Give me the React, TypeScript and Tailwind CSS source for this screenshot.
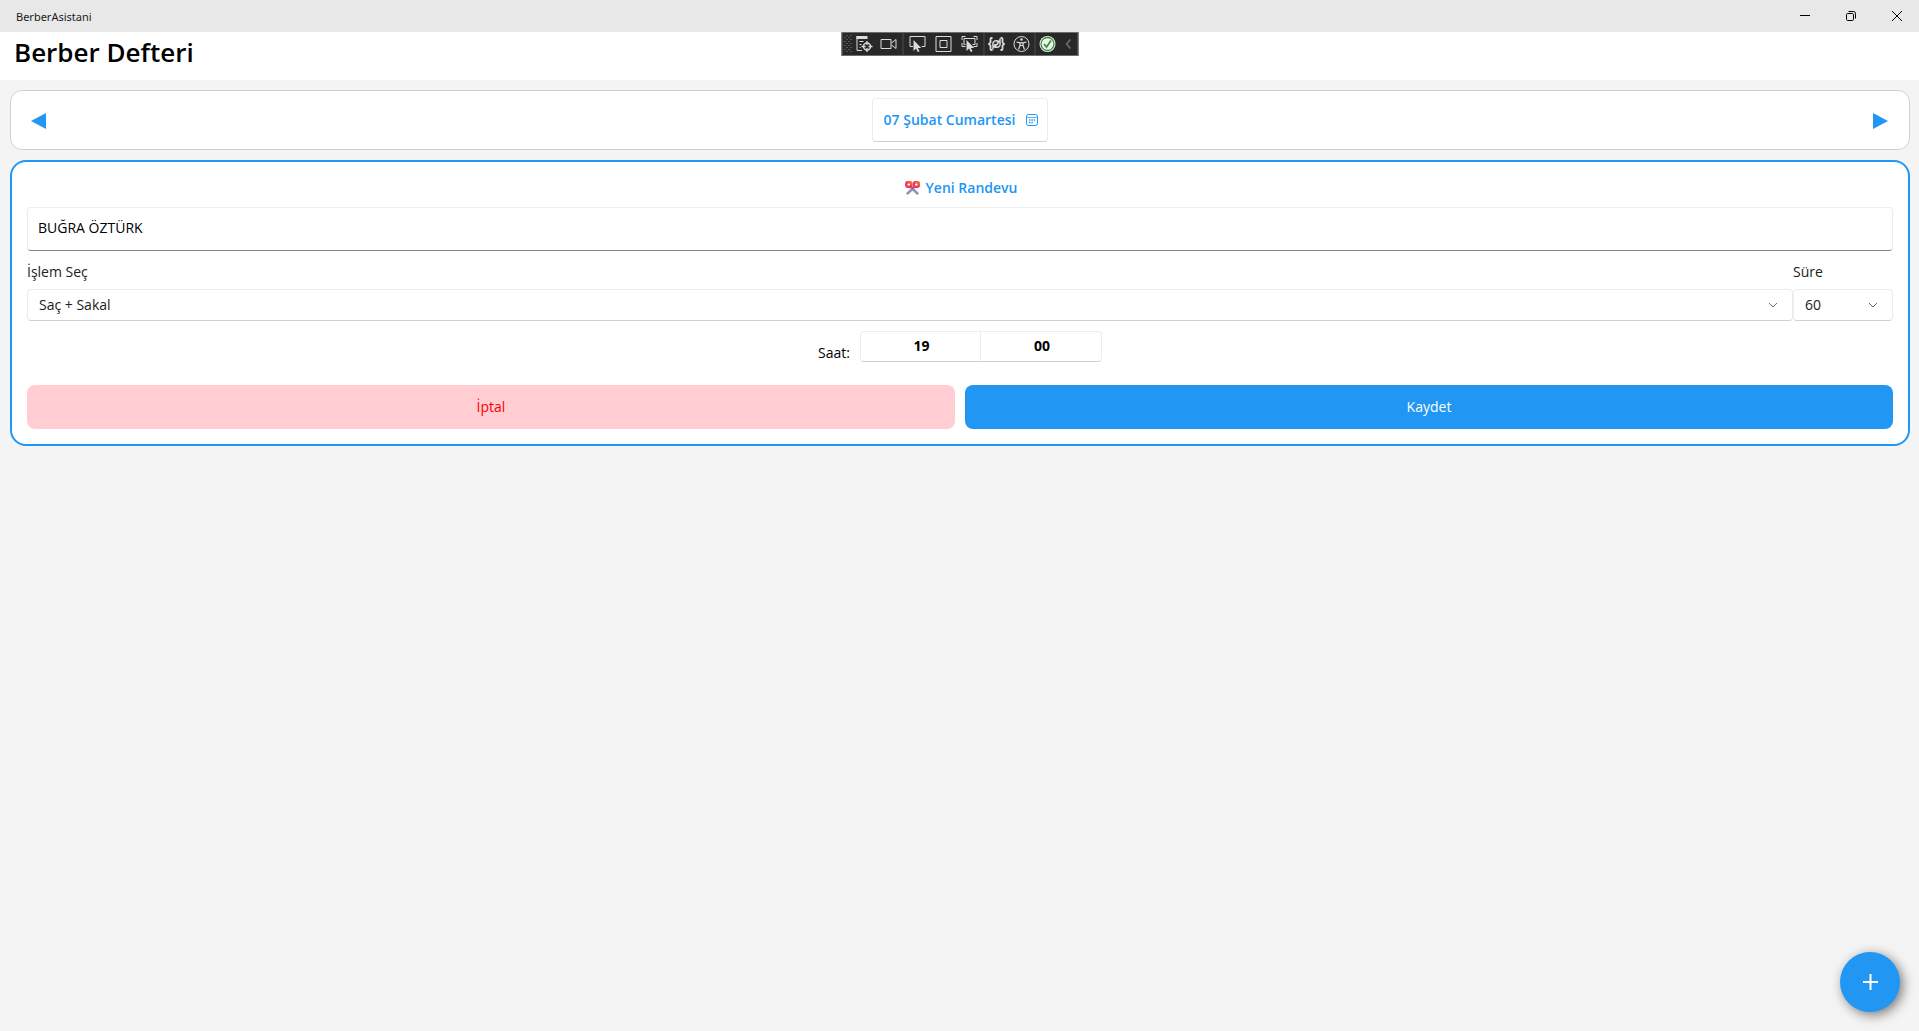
import { useState } from 'react';
import type { ReactNode } from 'react';

const SERVICES = ['Saç', 'Sakal', 'Saç + Sakal'];
const DURATIONS = ['15', '30', '45', '60', '90'];

function TitleBar() {
  return (
    <div className="flex h-8 items-center justify-between overflow-hidden bg-[#e8e8e8] pl-4">
      <span className="pt-0.5 font-['Noto_Sans',sans-serif] text-[11px] leading-4 text-[#1a1a1a]">BerberAsistani</span>
      <div className="-mr-px flex h-full">
        <button aria-label="Simge durumuna küçült" className="flex h-full w-[46px] items-center justify-center">
          <svg width="10" height="10" viewBox="0 0 10 10" shapeRendering="crispEdges">
            <path d="M0 4h10v1H0z" fill="#000" />
          </svg>
        </button>
        <button aria-label="Önceki boyut" className="flex h-full w-[46px] items-center justify-center">
          <svg width="10" height="10" viewBox="0 0 10 10" fill="none" stroke="#000">
            <rect x="0.5" y="2.5" width="7" height="7" rx="1.2" />
            <path d="M2.5 0.5h5a2 2 0 0 1 2 2v5" />
          </svg>
        </button>
        <button aria-label="Kapat" className="flex h-full w-[46px] items-center justify-center">
          <svg width="10" height="10" viewBox="0 0 10 10" fill="none" stroke="#000">
            <path d="M0 0l10 10M10 0L0 10" />
          </svg>
        </button>
      </div>
    </div>
  );
}

function ToolButton({ label, children }: { label: string; children: ReactNode }) {
  return (
    <button aria-label={label} className="flex h-full w-6 items-center justify-center">
      <svg width="18" height="18" viewBox="0 0 18 18" fill="none" stroke="#dcdcdc">
        {children}
      </svg>
    </button>
  );
}

const CURSOR = 'M0 0v10l2.3-2.2 1.6 3.2 1.6-.8L3.9 7.2H7z';

// Hata ayıklama araç çubuğu
function DebugToolbar() {
  return (
    <div className="absolute top-8 left-1/2 flex h-6 w-[237px] -translate-x-1/2 items-center border border-[#6b6f6b] bg-[#282828]">
      <svg width="9" height="18" viewBox="0 0 9 18" className="ml-px" shapeRendering="crispEdges">
        {[0, 4, 8, 12, 16].map((y) => (
          <path key={y} d={`M2 ${y}h2v1h-2zM6 ${y}h2v1h-2zM0 ${y + 2}h2v1h-2zM4 ${y + 2}h2v1h-2z`} fill="#555" />
        ))}
      </svg>
      <div className="flex w-12">
        <ToolButton label="Canlı görsel ağaç">
          <path d="M1.5 1v14.5h5" />
          <path d="M1 2.5h11" strokeWidth="3" />
          <path d="M4 6.5h4M4 9.5h2M4 12.5h1" />
          <circle cx="11.5" cy="11.5" r="3.5" strokeWidth="1.4" />
          <path d="M11.5 6v4M11.5 13v4M6 11.5h4M13 11.5h4" strokeWidth="1.3" />
        </ToolButton>
        <ToolButton label="Kayıt">
          <path d="M1.5 4.5h10v9h-10zM12 8l4.5-3.5v9L12 10" />
        </ToolButton>
      </div>
      <div className="ml-0.5 h-full w-px bg-[#4a4a4a]" />
      <div className="flex w-20 justify-between px-0.5">
        <ToolButton label="Öğe seç">
          <path d="M4.5 11.5h-3v-10h15v10h-3.5" />
          <path d={CURSOR} transform="translate(5 5) scale(1.1)" fill="#dcdcdc" stroke="none" />
        </ToolButton>
        <ToolButton label="Düzen kılavuzları">
          <path d="M1.5 1.5h15v15h-15zM5.5 5.5h7v7h-7z" />
        </ToolButton>
        <ToolButton label="Odağı izle">
          <path d="M1.5 5V1.5H5M13 1.5h3.5V5M1.5 8v3.5H5M16.5 8v3.5H13M5 9.5H3.5v-6h11v6H12" />
          <path d={CURSOR} transform="translate(6 5) scale(1.1)" fill="#dcdcdc" stroke="none" />
        </ToolButton>
      </div>
      <div className="h-full w-px bg-[#4a4a4a]" />
      <div className="flex w-[50px] justify-between pr-px">
        <ToolButton label="Çalışırken yenile">
          <path
            d="M5 3H4Q3 3 3 4v3.5L1.5 9 3 10.5V14q0 1 1 1h1M13 3h1q1 0 1 1v3.5L16.5 9 15 10.5V14q0 1-1 1h-1"
            strokeWidth="1.8"
          />
          <path
            d="M5.5 11C4.5 6 8 4.5 12 6.5M12.5 7c1 5-2.5 6.5-6.5 4.5M12.5 3.5V7H9M5.5 14.5V11H9M7 9l1.5 1.5L11 8"
            strokeWidth="1.4"
          />
        </ToolButton>
        <ToolButton label="Erişilebilirlik">
          <circle cx="9" cy="9" r="7.5" />
          <circle cx="9" cy="4.5" r="1.3" fill="#dcdcdc" stroke="none" />
          <path d="M4 7l3.5.8v2.7L6 14.5M14 7l-3.5.8v2.7l1.5 4M7.5 7.8h3M7.5 10.5h3" strokeWidth="1.2" />
        </ToolButton>
      </div>
      <div className="h-full w-px bg-[#4a4a4a]" />
      <ToolButton label="Bağlantı durumu">
        <circle cx="9" cy="9" r="8" fill="#f2f2f2" stroke="none" />
        <circle cx="9" cy="9" r="6.5" stroke="#389438" strokeWidth="1.3" />
        <path d="M5.5 9L8 12l4.5-6.5" stroke="#389438" strokeWidth="1.8" />
      </ToolButton>
      <button aria-label="Daralt" className="flex h-full flex-1 items-center justify-center">
        <svg width="6" height="10" viewBox="0 0 6 10" fill="none" stroke="#6e6e6e" strokeWidth="1.6">
          <path d="M5 0.5L1 5l4 4.5" />
        </svg>
      </button>
    </div>
  );
}

function CalendarIcon() {
  return (
    <svg width="12" height="12" viewBox="0 0 12 12" fill="none" stroke="#2196f3">
      <rect x="0.5" y="0.5" width="11" height="11" rx="2" />
      <path d="M0.5 3.5h11" strokeOpacity="0.7" />
      <path d="M3 6h1.4M5.4 6h1.4M7.8 6h1.4M3 8.5h1.4M5.4 8.5h1.4" strokeWidth="1.6" />
    </svg>
  );
}

function ScissorsIcon() {
  return (
    <svg width="15" height="14" viewBox="0 0 15 14" fill="none">
      <path d="M5.5 6l7 6.5M9.5 6l-7 6.5" stroke="#998eac" strokeWidth="2.4" strokeLinecap="round" />
      <path d="M5.5 5.5h4l-2 3z" fill="#a8508c" />
      <rect x="1.2" y="1.2" width="5" height="4.6" rx="1.8" stroke="#f0345a" strokeWidth="2.4" />
      <rect x="8.8" y="1.2" width="5" height="4.6" rx="1.8" stroke="#f0345a" strokeWidth="2.4" />
      <path
        d="M3 1.2h1.7a1.5 1.5 0 0 1 1.5 1.5v1M10.5 1.2h1.8a1.5 1.5 0 0 1 1.5 1.5v1"
        stroke="#fb6a22"
        strokeWidth="2.2"
      />
    </svg>
  );
}

interface PickerProps {
  id: string;
  label: string;
  value: string;
  options: string[];
  onChange: (value: string) => void;
}

function Picker({ id, label, value, options, onChange }: PickerProps) {
  return (
    <div className="flex flex-col gap-[6px]">
      <label htmlFor={id} className="leading-[22px] text-[#212121]">
        {label}
      </label>
      <div className="grid">
        <select
          id={id}
          value={value}
          onChange={(e) => onChange(e.target.value)}
          className="col-start-1 row-start-1 h-8 w-full appearance-none rounded-[4px] border border-[#ececec] border-b-[#d0d0d0] bg-white pr-8 pl-[11px] text-[#212121]"
        >
          {options.map((option) => (
            <option key={option}>{option}</option>
          ))}
        </select>
        <svg
          width="10"
          height="6"
          viewBox="0 0 10 6"
          fill="none"
          stroke="#6b6b6b"
          className="pointer-events-none col-start-1 row-start-1 mr-[15px] self-center justify-self-end"
        >
          <path d="M1 1l4 4 4-4" />
        </svg>
      </div>
    </div>
  );
}

export default function App() {
  const [name, setName] = useState('BUĞRA ÖZTÜRK');
  const [service, setService] = useState('Saç + Sakal');
  const [duration, setDuration] = useState('60');
  const [hour, setHour] = useState('19');
  const [minute, setMinute] = useState('00');

  return (
    <div className="relative min-h-screen bg-[#f4f4f4] font-['Open_Sans',sans-serif] text-sm text-black">
      <TitleBar />
      <header className="h-12 bg-white px-[14px]">
        <h1 className="text-[26px] leading-10 font-semibold">Berber Defteri</h1>
      </header>
      <DebugToolbar />

      <main className="flex flex-col gap-[10px] py-[10px] pr-[9px] pl-[10px]">
        {/* Tarih seçimi */}
        <div className="flex h-[60px] items-center justify-between rounded-xl border border-[#d0d0d0] bg-white px-5">
          <button aria-label="Önceki gün" className="pt-0.5">
            <svg width="16" height="16" viewBox="0 0 16 16" fill="#2196f3">
              <path d="M0 8L15 0v16z" />
            </svg>
          </button>
          <button className="flex h-11 items-center gap-[11px] rounded-[4px] border border-[#ececec] border-b-[#d0d0d0] pr-[9px] pl-[11px] font-semibold text-[#2196f3]">
            07 Şubat Cumartesi
            <CalendarIcon />
          </button>
          <button aria-label="Sonraki gün" className="pt-0.5">
            <svg width="16" height="16" viewBox="0 0 16 16" fill="#2196f3">
              <path d="M15 8L0 0v16z" />
            </svg>
          </button>
        </div>

        {/* Yeni randevu formu */}
        <form
          onSubmit={(e) => e.preventDefault()}
          className="flex flex-col gap-[10px] rounded-2xl border-2 border-[#2196f3] bg-white p-[15px]"
        >
          <h2 className="flex h-5 items-center justify-center gap-[6px] pt-0.5 pl-0.5 font-semibold text-[#2196f3]">
            <ScissorsIcon />
            Yeni Randevu
          </h2>
          <input
            type="text"
            aria-label="Müşteri adı"
            value={name}
            onChange={(e) => setName(e.target.value)}
            className="h-11 w-full rounded-[4px] border border-[#ececec] border-b-[#868686] px-[10px] pb-1"
          />
          <div className="grid grid-cols-[1fr_100px]">
            <Picker id="service" label="İşlem Seç" value={service} options={SERVICES} onChange={setService} />
            <Picker id="duration" label="Süre" value={duration} options={DURATIONS} onChange={setDuration} />
          </div>
          <div className="flex h-11 items-start justify-center gap-[10px]">
            <label htmlFor="hour" className="pt-3 leading-5">
              Saat:
            </label>
            <div className="flex h-[31px] w-[242px] overflow-hidden rounded-[4px] border border-[#ececec] border-b-[#d0d0d0] font-bold">
              <input
                id="hour"
                value={hour}
                onChange={(e) => setHour(e.target.value)}
                className="w-1/2 border-r border-[#ececec] pb-0.5 pl-0.5 text-center"
              />
              <input
                aria-label="Dakika"
                value={minute}
                onChange={(e) => setMinute(e.target.value)}
                className="w-1/2 pb-0.5 pl-0.5 text-center"
              />
            </div>
          </div>
          <div className="grid grid-cols-2 gap-[10px]">
            <button type="button" className="h-11 rounded-lg bg-[#ffcdd2] text-[#ff0000]">
              İptal
            </button>
            <button type="submit" className="h-11 rounded-lg bg-[#2196f3] text-white">
              Kaydet
            </button>
          </div>
        </form>
      </main>

      <button
        aria-label="Randevu ekle"
        className="fixed right-[19px] bottom-[19px] flex size-[60px] items-center justify-center rounded-full bg-[#2196f3] shadow-[3px_3px_12px_rgba(0,0,0,0.5)]"
      >
        <svg width="15" height="16" viewBox="0 0 15 16" fill="none" stroke="#fff" strokeWidth="2">
          <path d="M0 8h15M7.5 0v16" />
        </svg>
      </button>
    </div>
  );
}
